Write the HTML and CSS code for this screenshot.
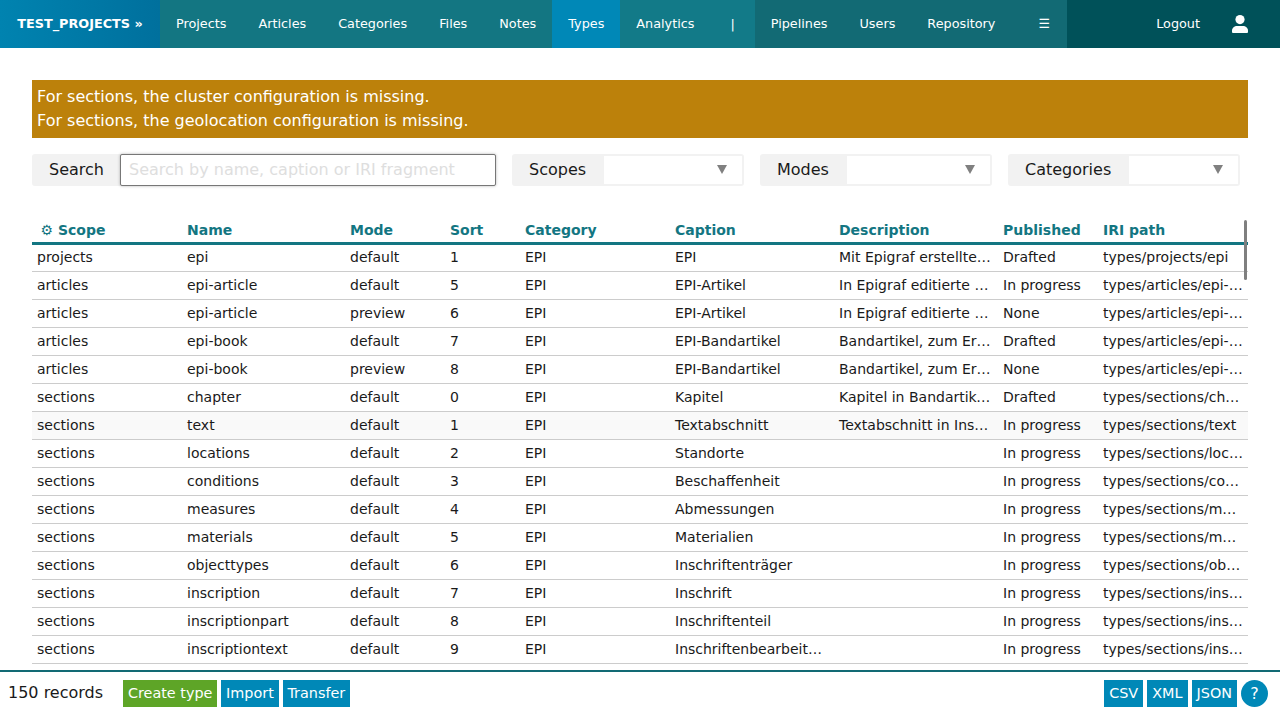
FILE: index.html
```html
<!DOCTYPE html>
<html lang="en">
<head>
    <meta charset="UTF-8">
    <title>Types</title>
    <link rel="stylesheet" href="styles.css">
</head>
<body>
    <nav class="topnav">
        <a class="nav-brand" href="#">TEST_PROJECTS »</a>
        <div class="nav-group nav-main">
            <a href="#">Projects</a>
            <a href="#">Articles</a>
            <a href="#">Categories</a>
            <a href="#">Files</a>
            <a href="#">Notes</a>
            <a class="active" href="#">Types</a>
        </div>
        <div class="nav-group nav-light">
            <a href="#">Analytics</a>
            <a class="nav-sep" href="#">|</a>
        </div>
        <div class="nav-group nav-admin">
            <a href="#">Pipelines</a>
            <a href="#">Users</a>
            <a href="#">Repository</a>
            <a class="nav-burger" href="#">☰</a>
        </div>
        <div class="nav-group nav-user">
            <a href="#">Logout</a>
            <a class="nav-avatar" href="#">
                <svg width="16" height="18" viewBox="0 0 16 18"><circle cx="8" cy="4.6" r="4.6" fill="#fff"/><path d="M1 18a1 1 0 0 1-1-1v-1.500C0 13 2.500 11 5 11h6c2.500 0 5 2 5 4.500V17a1 1 0 0 1-1 1z" fill="#fff"/></svg>
            </a>
        </div>
    </nav>

    <main class="content">
        <div class="alert">
            <div>For sections, the cluster configuration is missing.</div>
            <div>For sections, the geolocation configuration is missing.</div>
        </div>

        <div class="filters">
            <div class="filter filter-search">
                <label>Search</label>
                <input type="text" placeholder="Search by name, caption or IRI fragment">
            </div>
            <div class="filter">
                <label>Scopes</label>
                <div class="select"><span class="arrow"></span></div>
            </div>
            <div class="filter">
                <label>Modes</label>
                <div class="select"><span class="arrow"></span></div>
            </div>
            <div class="filter">
                <label>Categories</label>
                <div class="select"><span class="arrow"></span></div>
            </div>
        </div>

        <div class="table-wrap">
            <div class="scrollbar"></div>
            <table>
                <colgroup>
                    <col class="w150"><col class="w163"><col class="w100"><col class="w75"><col class="w150"><col class="w164"><col class="w164"><col class="w100"><col class="w150">
                </colgroup>
                <thead>
                    <tr>
                        <th><span class="gear">⚙</span> Scope</th>
                        <th>Name</th>
                        <th>Mode</th>
                        <th>Sort</th>
                        <th>Category</th>
                        <th>Caption</th>
                        <th>Description</th>
                        <th>Published</th>
                        <th>IRI path</th>
                    </tr>
                </thead>
                <tbody>
                    <tr><td>projects</td><td>epi</td><td>default</td><td>1</td><td>EPI</td><td>EPI</td><td>Mit Epigraf erstellte Projekte</td><td>Drafted</td><td>types/projects/epi</td></tr>
                    <tr><td>articles</td><td>epi-article</td><td>default</td><td>5</td><td>EPI</td><td>EPI-Artikel</td><td>In Epigraf editierte Artikel</td><td>In progress</td><td>types/articles/epi-article</td></tr>
                    <tr><td>articles</td><td>epi-article</td><td>preview</td><td>6</td><td>EPI</td><td>EPI-Artikel</td><td>In Epigraf editierte Artikel</td><td>None</td><td>types/articles/epi-article</td></tr>
                    <tr><td>articles</td><td>epi-book</td><td>default</td><td>7</td><td>EPI</td><td>EPI-Bandartikel</td><td>Bandartikel, zum Erstellen</td><td>Drafted</td><td>types/articles/epi-book</td></tr>
                    <tr><td>articles</td><td>epi-book</td><td>preview</td><td>8</td><td>EPI</td><td>EPI-Bandartikel</td><td>Bandartikel, zum Erstellen</td><td>None</td><td>types/articles/epi-book</td></tr>
                    <tr><td>sections</td><td>chapter</td><td>default</td><td>0</td><td>EPI</td><td>Kapitel</td><td>Kapitel in Bandartikeln und</td><td>Drafted</td><td>types/sections/chapter</td></tr>
                    <tr class="hover"><td>sections</td><td>text</td><td>default</td><td>1</td><td>EPI</td><td>Textabschnitt</td><td>Textabschnitt in Inschriften</td><td>In progress</td><td>types/sections/text</td></tr>
                    <tr><td>sections</td><td>locations</td><td>default</td><td>2</td><td>EPI</td><td>Standorte</td><td></td><td>In progress</td><td>types/sections/locations</td></tr>
                    <tr><td>sections</td><td>conditions</td><td>default</td><td>3</td><td>EPI</td><td>Beschaffenheit</td><td></td><td>In progress</td><td>types/sections/conditions</td></tr>
                    <tr><td>sections</td><td>measures</td><td>default</td><td>4</td><td>EPI</td><td>Abmessungen</td><td></td><td>In progress</td><td>types/sections/measures</td></tr>
                    <tr><td>sections</td><td>materials</td><td>default</td><td>5</td><td>EPI</td><td>Materialien</td><td></td><td>In progress</td><td>types/sections/materials</td></tr>
                    <tr><td>sections</td><td>objecttypes</td><td>default</td><td>6</td><td>EPI</td><td>Inschriftenträger</td><td></td><td>In progress</td><td>types/sections/objecttypes</td></tr>
                    <tr><td>sections</td><td>inscription</td><td>default</td><td>7</td><td>EPI</td><td>Inschrift</td><td></td><td>In progress</td><td>types/sections/inscription</td></tr>
                    <tr><td>sections</td><td>inscriptionpart</td><td>default</td><td>8</td><td>EPI</td><td>Inschriftenteil</td><td></td><td>In progress</td><td>types/sections/inscriptionpart</td></tr>
                    <tr><td>sections</td><td>inscriptiontext</td><td>default</td><td>9</td><td>EPI</td><td class="caption-cut">Inschriftenbearbeitung</td><td></td><td>In progress</td><td>types/sections/inscriptiontext</td></tr>
                </tbody>
            </table>
        </div>
    </main>

    <footer class="footer">
        <span class="records">150 records</span>
        <div class="actions actions-left">
            <a class="btn btn-green" href="#">Create type</a>
            <a class="btn" href="#">Import</a>
            <a class="btn" href="#">Transfer</a>
        </div>
        <div class="actions actions-right">
            <a class="btn" href="#">CSV</a>
            <a class="btn" href="#">XML</a>
            <a class="btn" href="#">JSON</a>
            <a class="btn btn-help" href="#">?</a>
        </div>
    </footer>
</body>
</html>
```

FILE: styles.css
```css
* {
    box-sizing: border-box;
}
html, body {
    height: 100%;
}
body {
    margin: 0;
    height: 715px;
    overflow: hidden;
    display: flex;
    flex-direction: column;
    background-color: white;
    color: #1a1a1a;
    font-family: "DejaVu Sans", sans-serif;
    font-size: 14px;
}
a {
    text-decoration: none;
    color: inherit;
}

/* top navigation */
.topnav {
    display: flex;
    flex: none;
    height: 48px;
    font-size: 12.8px;
    color: white;
}
.topnav a {
    display: flex;
    align-items: center;
    padding: 0 16px 1px;
    height: 48px;
}
.topnav .nav-brand {
    width: 160px;
    font-weight: bold;
    background: linear-gradient(90deg, #0083b0, #00709d);
    justify-content: center;
    padding: 0 0 1px;
}
.nav-group {
    display: flex;
}
.nav-main {
    background-color: #137682;
}
.topnav a.active {
    background-color: #0088b7;
}
.nav-light {
    background-color: #127a88;
}
.topnav a.nav-sep {
    padding: 0 20px 1px;
}
.nav-admin {
    background-color: #126a74;
}
.topnav a.nav-burger {
    padding: 0 17px 1px 27px;
}
.nav-user {
    flex: 1;
    justify-content: flex-end;
    background-color: #005159;
}
.topnav a.nav-avatar {
    padding: 0 32px 0 16px;
}

/* main area */
.content {
    flex: 1;
    min-height: 0;
    padding: 32px 32px 0;
    display: flex;
    flex-direction: column;
    overflow: hidden;
}
.alert {
    flex: none;
    background-color: #bc810b;
    color: white;
    font-size: 16px;
    line-height: 24px;
    padding: 5px;
}

/* filters */
.filters {
    flex: none;
    display: flex;
    gap: 16px;
    margin-top: 16px;
    padding-right: 8px;
}
.filter {
    flex: 0 0 232px;
    height: 32px;
    display: flex;
    background-color: #f2f2f2;
    border: 2px solid #f2f2f2;
    border-radius: 3px;
    font-size: 16px;
}
.filter label {
    padding: 0 18px 0 15px;
    line-height: 28px;
}
.filter-search {
    flex: 0 0 464px;
}
.filter-search label {
    padding-right: 16px;
}
.filter-search input {
    flex: 1;
    min-width: 0;
    height: 32px;
    margin: -2px -2px -2px 0;
    padding: 0 8px 2px;
    border: 1px solid #777;
    border-radius: 2px;
    box-shadow: 0 0 3px rgba(0, 0, 0, 0.3);
    font: inherit;
    outline: none;
}
.filter-search input::placeholder {
    color: #dedede;
}
.select {
    flex: 1;
    position: relative;
    background-color: white;
}
.arrow {
    position: absolute;
    right: 15px;
    top: 9px;
    border-left: 5px solid transparent;
    border-right: 5px solid transparent;
    border-top: 9px solid #808080;
}

/* table */
.table-wrap {
    flex: 1;
    min-height: 0;
    position: relative;
    margin-top: 34px;
    overflow: hidden;
}
.scrollbar {
    position: absolute;
    right: 1px;
    top: 0;
    width: 3px;
    height: 60px;
    border-radius: 2px;
    background-color: #7f7f7f;
    z-index: 2;
}
table {
    width: 1216px;
    table-layout: fixed;
    border-collapse: separate;
    border-spacing: 0;
}
.w75 { width: 75px; }
.w100 { width: 100px; }
.w150 { width: 150px; }
.w163 { width: 163px; }
.w164 { width: 164px; }
th, td {
    padding: 0 5px 2px;
    text-align: left;
    white-space: nowrap;
    overflow: hidden;
    text-overflow: ellipsis;
}
th {
    height: 25px;
    color: #137682;
    font-weight: bold;
    border-bottom: 3px solid #137682;
}
th:first-child {
    padding-left: 8.5px;
}
.gear {
    font-weight: normal;
    font-size: 14px;
}
td {
    height: 28px;
    border-bottom: 1px solid #ccc;
}
tbody tr:first-child td {
    height: 27px;
}
.caption-cut {
    padding-right: 11px;
}
tr.hover td {
    background-color: #f9f9f9;
}

/* footer */
.footer {
    flex: none;
    height: 45px;
    display: flex;
    align-items: flex-start;
    padding: 8px 12px 0 8px;
    border-top: 2px solid #126a74;
    font-size: 16px;
    background-color: white;
}
.records {
    line-height: 25px;
    margin-right: 20px;
}
.actions {
    display: flex;
    gap: 4px;
}
.actions-right {
    margin-left: auto;
}
.btn {
    height: 27px;
    padding: 0 5px;
    line-height: 27px;
    font-size: 14.4px;
    color: white;
    background-color: #0088b7;
}
.actions-left .btn {
    padding: 0 4.8px;
}
.btn-green {
    background-color: #5ea527;
}
.btn-help {
    width: 27px;
    padding: 0;
    border-radius: 50%;
    text-align: center;
    font-size: 16px;
}
```
